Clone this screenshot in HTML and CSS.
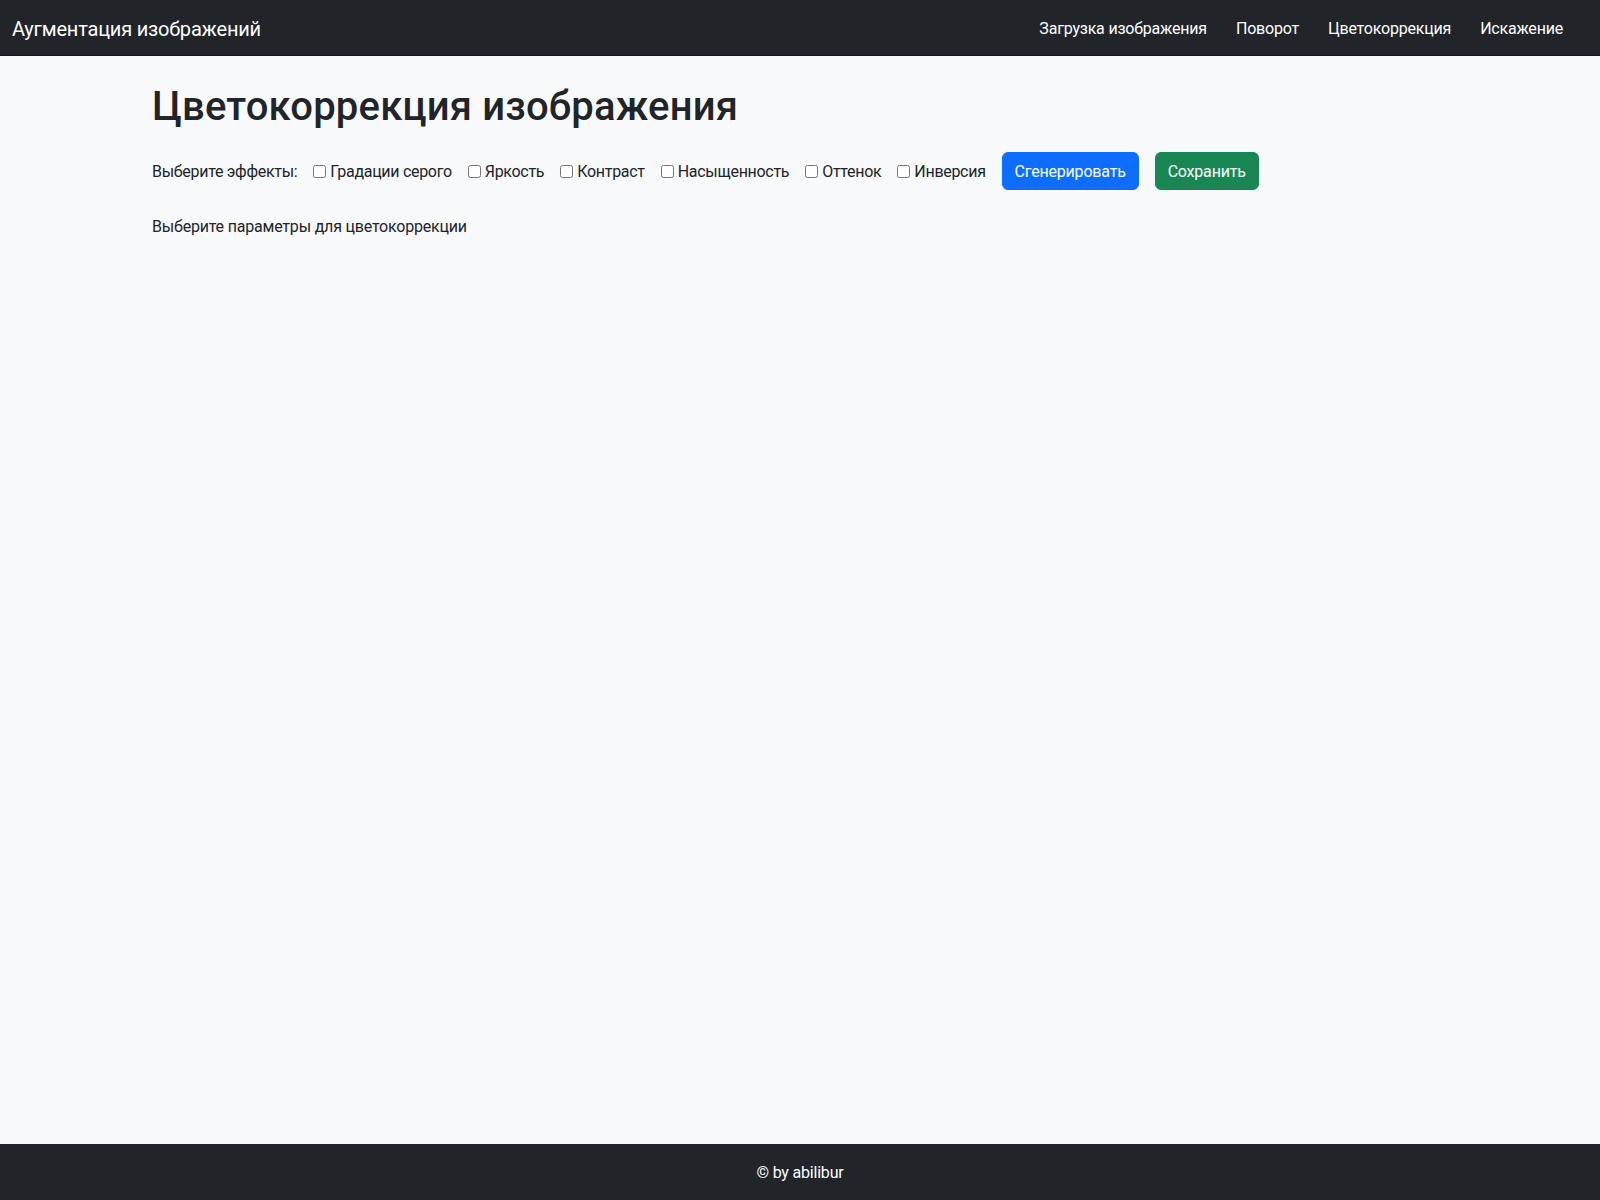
FILE: index.html
```html
<!DOCTYPE html>
<html lang="ru">
<head>
<meta charset="utf-8">
<title>Цветокоррекция изображения</title>
<link rel="stylesheet" href="styles.css">
</head>
<body>
<header class="navbar">
  <a class="brand" href="#">Аугментация изображений</a>
  <nav class="nav">
    <a class="nav-link" href="#">Загрузка изображения</a>
    <a class="nav-link" href="#">Поворот</a>
    <a class="nav-link" href="#">Цветокоррекция</a>
    <a class="nav-link" href="#">Искажение</a>
  </nav>
</header>
<main class="container">
  <h1 class="title">Цветокоррекция изображения</h1>
  <form class="effects">
    <span class="effects-label">Выберите эффекты:</span>
    <label class="check"><input type="checkbox"><span>Градации серого</span></label>
    <label class="check"><input type="checkbox"><span>Яркость</span></label>
    <label class="check"><input type="checkbox"><span>Контраст</span></label>
    <label class="check"><input type="checkbox"><span>Насыщенность</span></label>
    <label class="check"><input type="checkbox"><span>Оттенок</span></label>
    <label class="check"><input type="checkbox"><span>Инверсия</span></label>
    <button type="button" class="btn btn-primary">Сгенерировать</button>
    <button type="button" class="btn btn-success">Сохранить</button>
  </form>
  <p class="hint">Выберите параметры для цветокоррекции</p>
</main>
<footer class="footer">© by abilibur</footer>
</body>
</html>
```
FILE: styles.css
```css
html, body {
  margin: 0;
  padding: 0;
}
body {
  min-height: 100vh;
  display: flex;
  flex-direction: column;
  background: #f8f9fa;
  color: #212529;
  font-family: Roboto, "Open Sans", sans-serif;
  font-size: 16px;
  line-height: 1.5;
  letter-spacing: -0.2px;
}
.navbar {
  height: 55px;
  box-sizing: content-box;
  flex: none;
  display: flex;
  align-items: center;
  justify-content: space-between;
  padding: 0 37px 0 12px;
  background: #212529;
  border-bottom: 1px solid #16191c;
}
.brand {
  color: #fff;
  font-size: 20px;
  text-decoration: none;
  padding-top: 3px;
}
.nav {
  display: flex;
  gap: 29px;
  padding-top: 2px;
}
.nav-link {
  color: #fff;
  text-decoration: none;
  font-size: 16px;
}
.container {
  flex: 1;
  width: 1320px;
  box-sizing: border-box;
  margin: 0 auto;
  padding: 24px 12px 0;
}
.title {
  margin: 0 0 8px;
  padding-top: 3px;
  font-size: 40px;
  font-weight: 500;
  line-height: 1.2;
  letter-spacing: 0.2px;
}
.effects {
  margin: 21px 0 0;
  display: flex;
  align-items: center;
  gap: 16px;
  height: 38px;
}
.effects-label,
.check span {
  padding-top: 2px;
  letter-spacing: -0.3px;
}
.check {
  display: inline-flex;
  align-items: center;
}
.check input {
  margin: 0 4px 0 0;
  width: 13px;
  height: 13px;
}
.btn {
  font-family: inherit;
  font-size: 16px;
  line-height: 24px;
  letter-spacing: -0.2px;
  padding: 7px 12px 5px;
  border: 1px solid transparent;
  border-radius: 6px;
  color: #fff;
}
.btn-primary {
  background: #0d6efd;
  border-color: #0d6efd;
}
.btn-success {
  background: #198754;
  border-color: #198754;
}
.hint {
  margin: 24px 0 0;
  padding-top: 1px;
}
.footer {
  flex: none;
  height: 56px;
  box-sizing: border-box;
  padding-top: 2px;
  display: flex;
  align-items: center;
  justify-content: center;
  background: #212529;
  color: #fff;
}
```
